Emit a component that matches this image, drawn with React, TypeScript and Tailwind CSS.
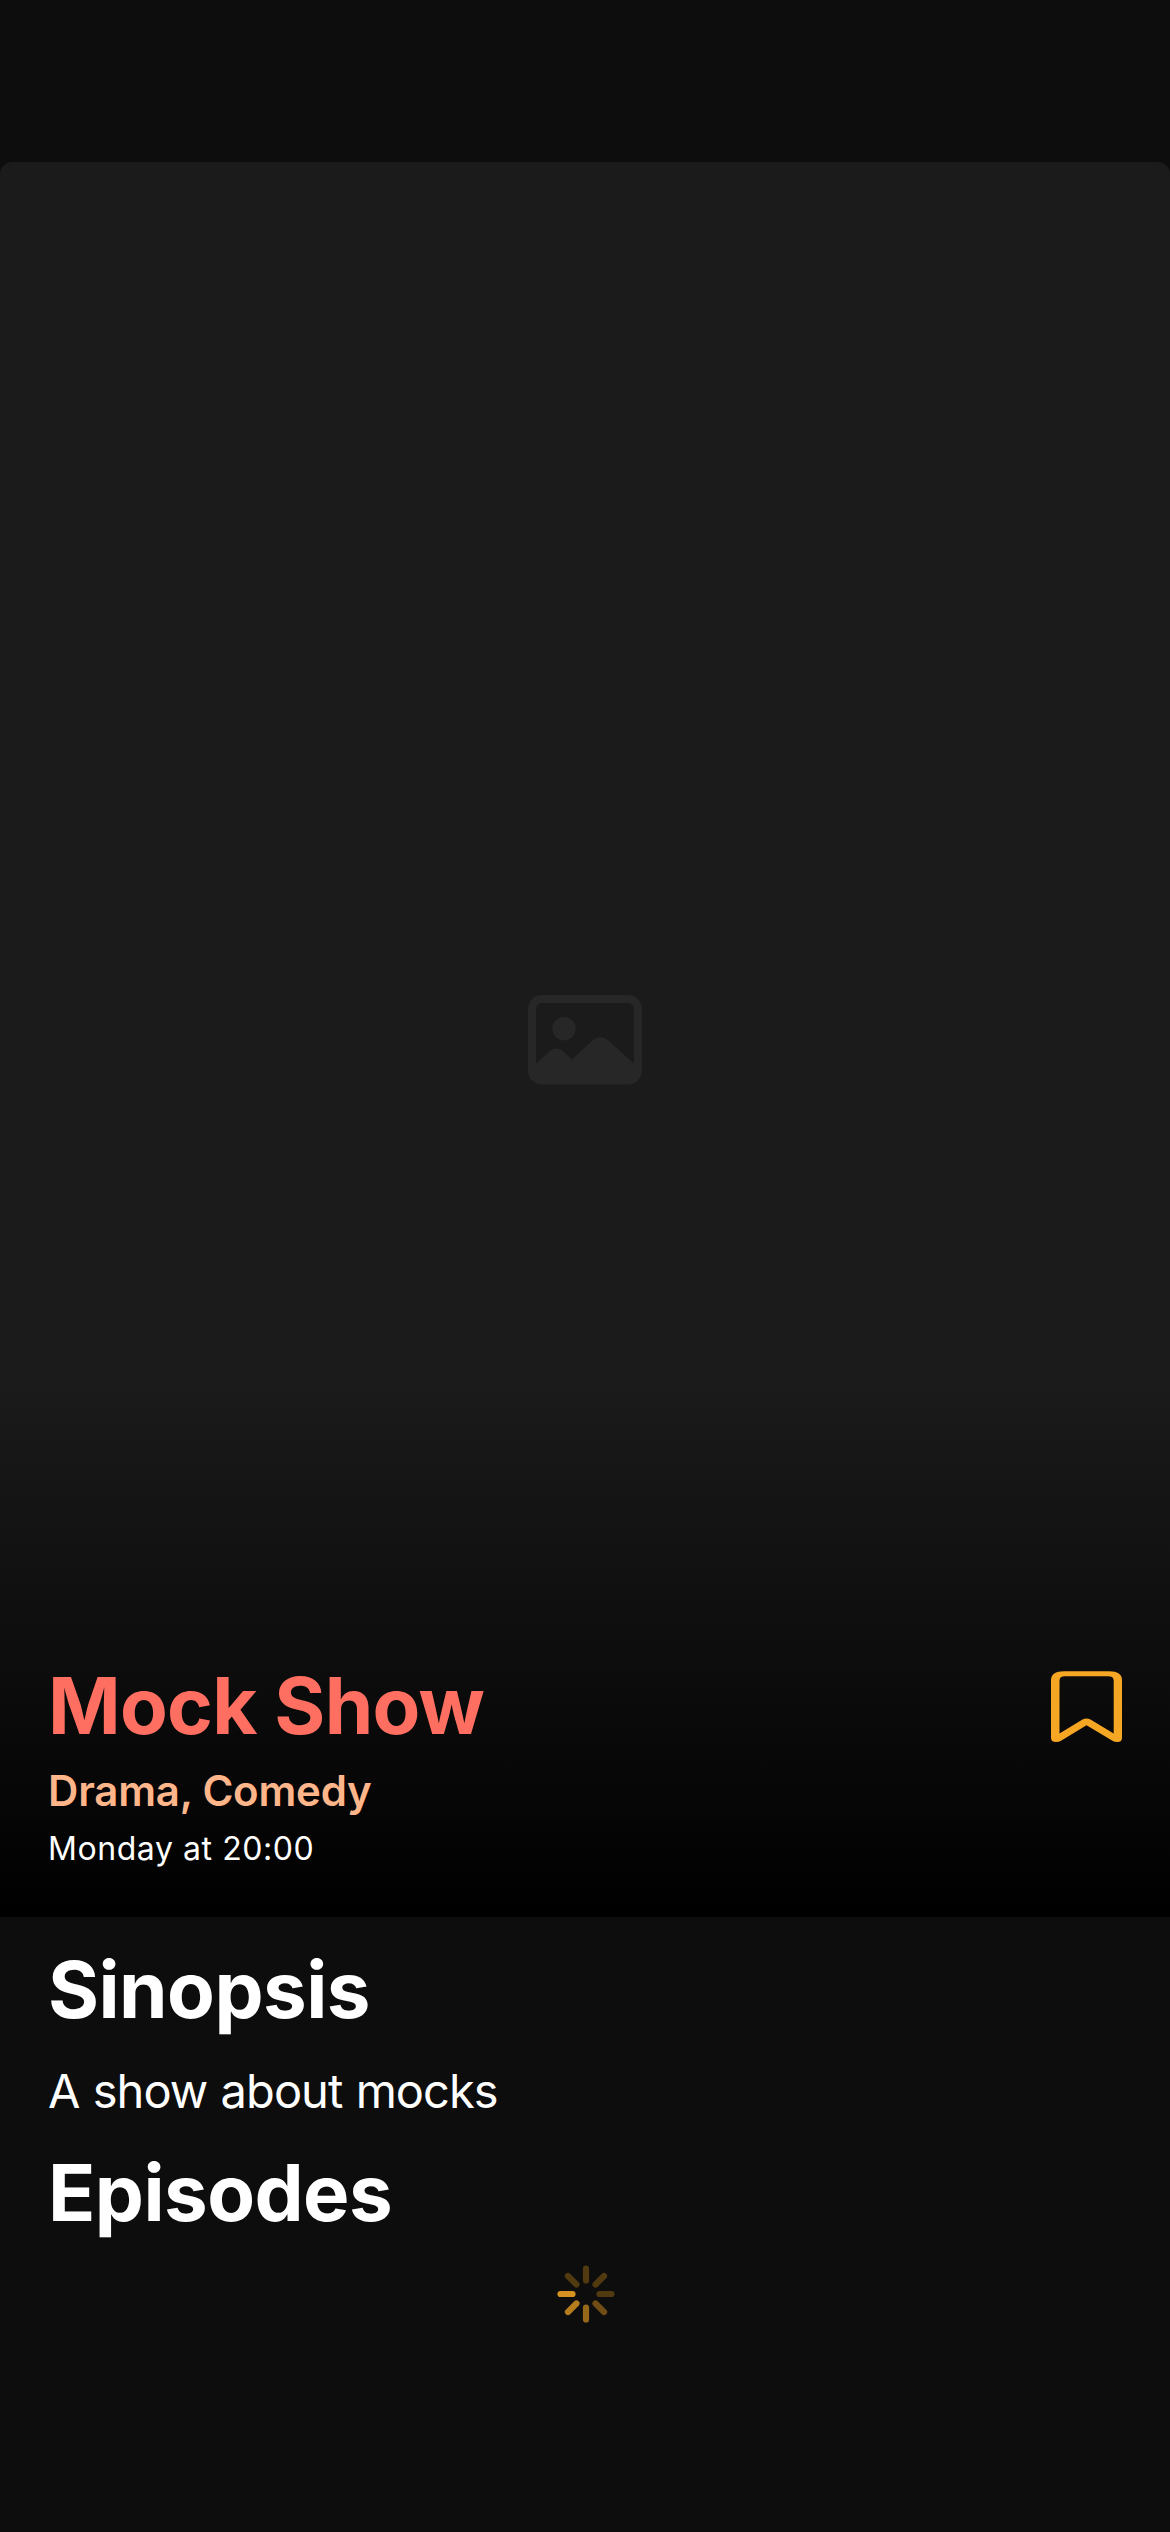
function PhotoIcon() {
  return (
    <svg className="h-[90px] w-[114px]" viewBox="0 0 114 90" fill="none">
      <rect x="4" y="4" width="106" height="81.500" rx="10" stroke="#272727" strokeWidth="8" />
      <circle cx="36" cy="33.700" r="11.700" fill="#272727" />
      <path
        d="M5 71.500L21.500 56.500Q28.500 50.500 35.500 56.500L44 64.500L64.500 45.500Q72.500 38.500 80.500 45.500L109 71.500V78Q109 86 100 86H14Q5 86 5 78Z"
        fill="#272727"
      />
    </svg>
  );
}

function BookmarkIcon() {
  return (
    <svg className="h-[72px] w-[72px]" viewBox="0 0 72 72" fill="none">
      <path
        fillRule="evenodd"
        clipRule="evenodd"
        fill="#f5a623"
        d="M13 .2H58Q71 .2 71 9V67Q71 71 66.500 71Q63.500 71 61 69.400L35.500 54.200L10.500 69.400Q8 71 5 71Q0 71 0 67V9Q0 .2 13 .2ZM14 5.200Q8.500 5.200 8.500 9.500V62.600L31.500 48.600Q35.500 46.200 39.500 48.600L62.700 62.600V9.500Q62.700 5.200 57 5.200Z"
      />
    </svg>
  );
}

const spokes = [
  { angle: 0, color: "#513910" },
  { angle: 45, color: "#513910" },
  { angle: 90, color: "#513910" },
  { angle: 135, color: "#6f4d15" },
  { angle: 180, color: "#96681a" },
  { angle: 225, color: "#b57c1e" },
  { angle: 270, color: "#d69220" },
  { angle: 315, color: "#513910" },
];

function Spinner() {
  return (
    <svg className="h-[58px] w-[58px]" viewBox="-29 -29 58 58">
      {spokes.map(({ angle, color }) => (
        <line
          key={angle}
          y1={-25.5}
          y2={-13.5}
          stroke={color}
          strokeWidth={6.2}
          strokeLinecap="round"
          transform={`rotate(${angle})`}
        />
      ))}
    </svg>
  );
}

export default function App() {
  return (
    <main className="flex h-[2532px] w-[1170px] flex-col overflow-hidden bg-[#0d0d0d] pt-[162px] font-['Inter',sans-serif] text-white">
      <section className="flex h-[1755px] shrink-0 flex-col rounded-t-[12px] bg-[#1b1b1b]">
        <div className="flex h-[1205px] shrink-0 justify-center pt-[833px]">
          <PhotoIcon />
        </div>
        <div className="flex flex-1 items-end justify-between bg-linear-to-b from-transparent to-black px-12 pb-12">
          <div className="flex flex-col">
            <h1 className="text-[78px] leading-[93px] font-bold tracking-[-0.75px] text-[#ff6f61]">Mock Show</h1>
            <p className="mt-[14px] text-[42px] leading-[50px] font-semibold tracking-[-0.2px] text-[#ffb58a]">Drama, Comedy</p>
            <p className="mt-[13px] text-[32px] leading-[40px] tracking-[0.57px]">Monday at 20:00</p>
          </div>
          <div className="-mr-px mb-[126px]">
            <BookmarkIcon />
          </div>
        </div>
      </section>
      <section className="flex flex-col px-12 pt-[26px]">
        <h2 className="text-[78px] leading-[93px] font-bold tracking-[-0.55px]">Sinopsis</h2>
        <p className="mt-[26px] text-[47px] leading-[58px] tracking-[-0.95px] [word-spacing:1px]">A show about mocks</p>
        <h2 className="mt-[26px] text-[78px] leading-[93px] font-bold tracking-[-0.55px]">Episodes</h2>
        <div className="mt-[26px] flex justify-center pl-px">
          <Spinner />
        </div>
      </section>
    </main>
  );
}
